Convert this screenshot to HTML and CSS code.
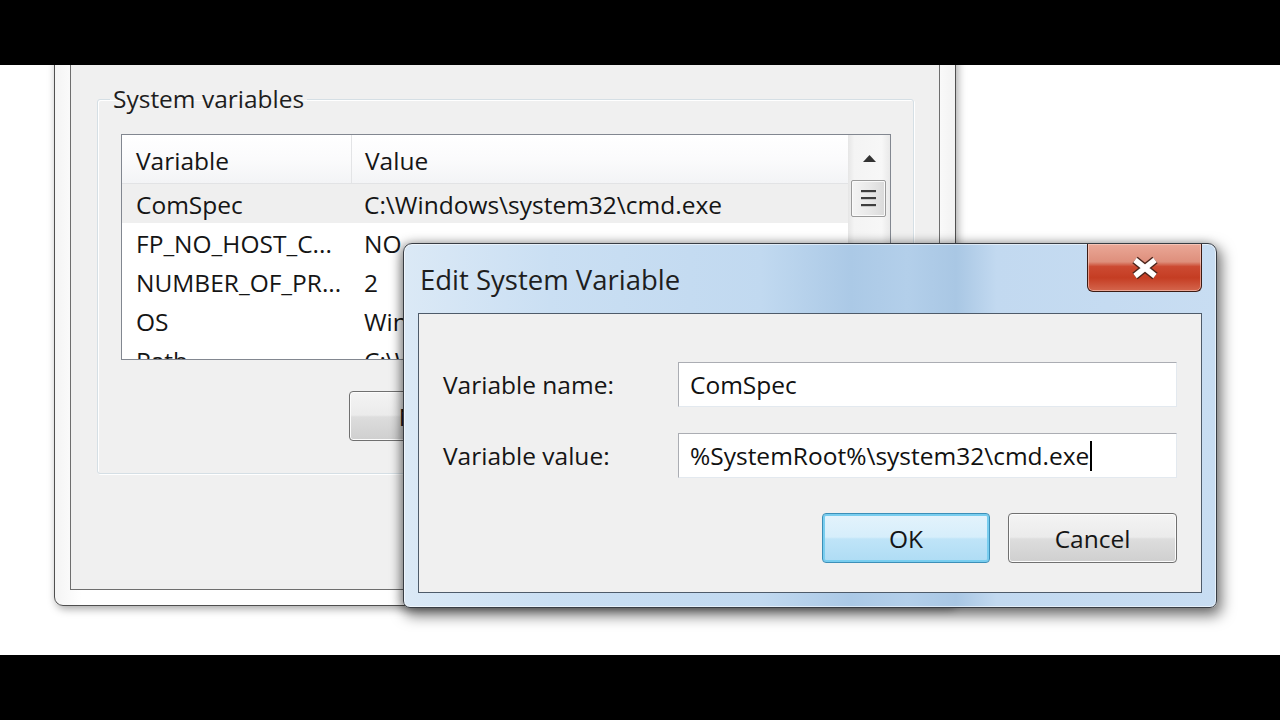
FILE: index.html
```html
<!DOCTYPE html>
<html lang="en">

<head>
    <meta charset="UTF-8">
    <title>Edit System Variable</title>
    <link rel="stylesheet" href="styles.css">
</head>

<body>
    <div class="bar"></div>

    <div class="desktop">
        <div class="window env-window">
            <div class="env-client">
                <fieldset class="group">
                    <legend>System variables</legend>
                    <div class="group-body">
                        <div class="list">
                            <div class="list-body">
                                <div class="list-head">
                                    <span class="col-name">Variable</span>
                                    <span class="col-value">Value</span>
                                </div>
                                <div class="list-row selected">
                                    <span class="col-name">ComSpec</span>
                                    <span class="col-value">C:\Windows\system32\cmd.exe</span>
                                </div>
                                <div class="list-row">
                                    <span class="col-name">FP_NO_HOST_C...</span>
                                    <span class="col-value">NO</span>
                                </div>
                                <div class="list-row">
                                    <span class="col-name">NUMBER_OF_PR...</span>
                                    <span class="col-value">2</span>
                                </div>
                                <div class="list-row">
                                    <span class="col-name">OS</span>
                                    <span class="col-value">Windows_NT</span>
                                </div>
                                <div class="list-row">
                                    <span class="col-name">Path</span>
                                    <span class="col-value">C:\Windows\system32</span>
                                </div>
                            </div>
                            <div class="scrollbar">
                                <div class="scroll-up">
                                    <svg width="13" height="7" viewBox="0 0 13 7">
                                        <polygon points="0,7 6.5,0 13,7" fill="#333" />
                                    </svg>
                                </div>
                                <div class="scroll-thumb">
                                    <span></span>
                                    <span></span>
                                    <span></span>
                                </div>
                            </div>
                        </div>

                        <div class="group-actions">
                            <button class="btn">New...</button>
                            <button class="btn">Edit...</button>
                            <button class="btn">Delete</button>
                        </div>
                    </div>
                </fieldset>
            </div>
        </div>

        <div class="window dialog">
            <div class="titlebar">
                <span class="title">Edit System Variable</span>
                <button class="close">
                    <svg width="32" height="24" viewBox="0 0 32 24">
                        <path d="M6 4 L26 20 M26 4 L6 20" stroke="#4a241b" stroke-width="8.5" fill="none" />
                        <path d="M6 4 L26 20 M26 4 L6 20" stroke="#fff" stroke-width="5.5" fill="none" />
                    </svg>
                </button>
            </div>

            <div class="dialog-client">
                <div class="form">
                    <label>Variable name:</label>
                    <div class="textbox">ComSpec</div>
                    <label>Variable value:</label>
                    <div class="textbox">%SystemRoot%\system32\cmd.exe<span class="caret"></span></div>
                </div>

                <div class="dialog-actions">
                    <button class="btn btn-default">OK</button>
                    <button class="btn">Cancel</button>
                </div>
            </div>
        </div>
    </div>

    <div class="bar"></div>
</body>

</html>
```

FILE: styles.css
```css
* {
    margin: 0;
    padding: 0;
    box-sizing: border-box;
}

body {
    width: 1280px;
    height: 720px;
    overflow: hidden;
    background: #000;
    font-family: "Open Sans", "Noto Sans", sans-serif;
    font-size: 24.5px;
    color: #151515;
}

.bar {
    height: 65px;
    background: #000;
}

.desktop {
    position: relative;
    height: 590px;
    background: #fff;
    overflow: hidden;
}

.window {
    position: absolute;
}

/* Environment Variables window (behind) */

.env-window {
    left: 54px;
    top: -35px;
    width: 902px;
    height: 576px;
    padding: 15px;
    background: linear-gradient(to right, #f4f4f4, #fff 3%, #fff 97%, #f2f2f2);
    border: 1px solid #4f4f4f;
    border-radius: 0 0 9px 9px;
    box-shadow: 2px 3px 9px rgba(0, 0, 0, 0.35);
}

.env-client {
    height: 100%;
    padding: 37px 25px 0 26px;
    background: #f0f0f0;
    border: 1px solid #6e6e6e;
}

.group {
    border: 1px solid #d5dfe5;
    border-radius: 3px;
    box-shadow: 1px 1px 0 #fff, inset 1px 1px 0 #fff;
}

.group legend {
    margin-left: 12px;
    padding: 0 3px;
    line-height: 30px;
    color: #1e1e1e;
}

.group-body {
    padding: 20px 22px 32px 23px;
}

.list {
    display: flex;
    height: 226px;
    background: #fff;
    border: 1px solid #828790;
    overflow: hidden;
}

.list-body {
    flex: 1;
}

.list-head,
.list-row {
    display: grid;
    grid-template-columns: 229px 1fr;
    align-items: center;
    white-space: nowrap;
}

.list-head {
    height: 49px;
    padding-top: 3px;
    background: linear-gradient(#fff, #fbfbfc 50%, #f3f4f6);
    border-bottom: 1px solid #e2e3e5;
}

.list-head .col-value {
    align-self: stretch;
    display: flex;
    align-items: center;
    margin-top: -3px;
    padding-top: 3px;
    border-left: 1px solid #e3e4e6;
}

.list-row {
    height: 39px;
    padding-top: 2px;
}

.list-row.selected {
    background: #efefef;
}

.col-name {
    padding-left: 14px;
}

.col-value {
    padding-left: 13px;
}

.scrollbar {
    width: 42px;
    background: linear-gradient(to right, #e6e6e6, #f4f4f4 15%, #f7f7f7 80%, #e9e9e9);
}

.scroll-up {
    height: 44px;
    display: flex;
    align-items: center;
    justify-content: center;
    padding-top: 2px;
}

.scroll-thumb {
    margin: 1px 4px 0 3px;
    height: 37px;
    display: flex;
    flex-direction: column;
    align-items: center;
    justify-content: center;
    gap: 4px;
    background: linear-gradient(to right, #f4f4f4, #e9e9e9 50%, #dadada);
    border: 1px solid #9a9a9a;
    border-radius: 2px;
    box-shadow: inset 0 0 0 1px #fafafa;
}

.scroll-thumb span {
    width: 15px;
    height: 3px;
    background: #3e3e3e;
    border-bottom: 1px solid #c8c8c8;
}

.group-actions {
    display: flex;
    justify-content: flex-end;
    gap: 16px;
    margin-top: 31px;
}

/* Buttons */

.btn {
    width: 170px;
    height: 50px;
    font-family: inherit;
    font-size: 24.5px;
    color: #151515;
    background: linear-gradient(#f4f4f4, #ebebeb 48%, #dddddd 52%, #cfcfcf);
    border: 1px solid #707070;
    border-radius: 4px;
    box-shadow: inset 0 0 0 1px #fcfcfc;
}

.btn-default {
    width: 168px;
    background: linear-gradient(#e4f3fc, #d6eefb 48%, #bfe4f8 52%, #aedcf4);
    border-color: #3c8fb8;
    box-shadow: inset 0 0 0 2px #78cdef;
}

/* Edit System Variable dialog */

.dialog {
    left: 403px;
    top: 178px;
    width: 814px;
    height: 365px;
    display: flex;
    flex-direction: column;
    background: linear-gradient(to right, #dbe9f6 0%, #cadff3 18%, #c1d9f0 44%, #abc9e6 55%, #b3cfea 62%, #a9c7e4 68%, #c2d9f0 73%, #c8ddf2 100%);
    border: 1px solid #383d44;
    border-radius: 9px 9px 7px 7px;
    box-shadow: 3px 6px 14px 2px rgba(0, 0, 0, 0.5), -3px 0 10px rgba(0, 0, 0, 0.25), inset 0 0 0 1px rgba(255, 255, 255, 0.55);
}

.titlebar {
    height: 69px;
    display: flex;
    align-items: flex-start;
    padding-left: 16px;
}

.title {
    margin-top: 17px;
    font-size: 27.5px;
    line-height: 38px;
    color: #1e1e1e;
}

.close {
    margin-left: auto;
    margin-right: 14px;
    width: 115px;
    height: 48px;
    display: flex;
    align-items: center;
    justify-content: center;
    background: linear-gradient(#eaa897, #de8f7c 38%, #cc4a32 48%, #c53d23 72%, #d4664d 100%);
    border: 1px solid #3c1b14;
    border-top: none;
    border-radius: 0 0 6px 6px;
    box-shadow: inset 0 0 0 1px rgba(255, 220, 210, 0.55);
}

.dialog-client {
    flex: 1;
    margin: 0 14px 14px;
    padding: 48px 24px 0;
    background: #f0f0f0;
    border: 1px solid #4e5b6a;
}

.form {
    display: grid;
    grid-template-columns: 235px 1fr;
    row-gap: 26px;
    align-items: center;
}

.textbox {
    height: 45px;
    display: flex;
    align-items: center;
    padding-left: 11px;
    background: #fff;
    border: 1px solid;
    border-color: #abadb3 #e3e9ef #e3e9ef #abadb3;
    color: #111;
}

.caret {
    width: 2px;
    height: 30px;
    margin-left: 1px;
    background: #000;
}

.dialog-actions {
    display: flex;
    justify-content: flex-end;
    gap: 18px;
    margin-top: 35px;
}

.dialog-actions .btn {
    width: 169px;
}

.dialog-actions .btn-default {
    width: 168px;
}
```
